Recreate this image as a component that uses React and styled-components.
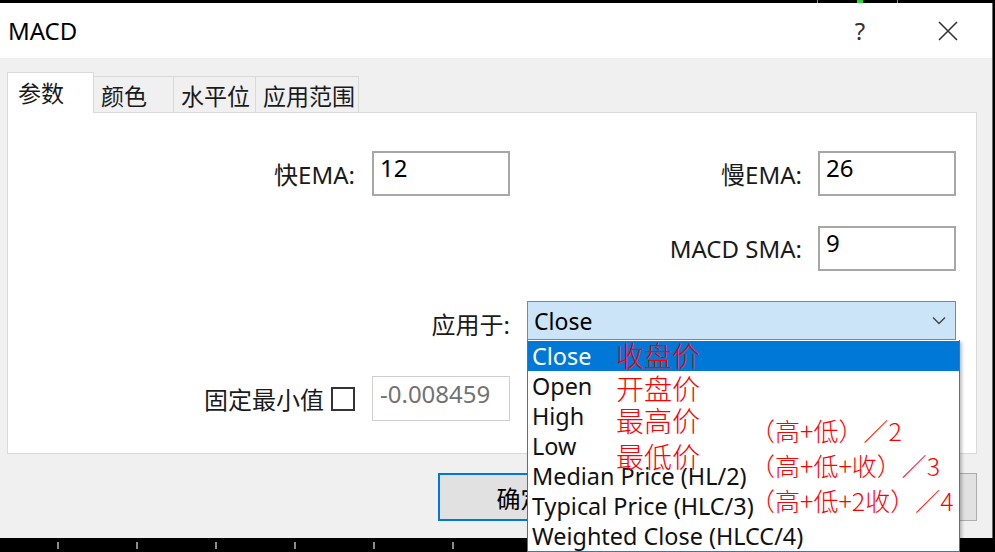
import styled, { createGlobalStyle } from "styled-components";

const GlobalStyle = createGlobalStyle`
  html, body {
    margin: 0;
    padding: 0;
    background: #000;
  }
  body {
    font-family: "Noto Sans", "Noto Sans CJK SC", sans-serif;
  }
`;

const Screen = styled.div`
  width: 995px;
  height: 552px;
  overflow: hidden;
  background: #000;
  display: flex;
  flex-direction: column;
`;

const TopStrip = styled.div`
  flex: none;
  height: 3px;
  background:
    linear-gradient(#2bd13a, #2bd13a) 817px 0 / 1px 3px no-repeat,
    linear-gradient(#2bd13a, #2bd13a) 857px 0 / 6px 3px no-repeat,
    linear-gradient(#2bd13a, #2bd13a) 897px 0 / 1px 3px no-repeat,
    #000;
`;

const Middle = styled.div`
  flex: none;
  height: 535px;
  display: flex;
`;

const RightStrip = styled.div`
  flex: 1;
  background: #000;
`;

const BottomStrip = styled.div`
  flex: 1;
  background:
    repeating-linear-gradient(to right, transparent 0 57px, #8a8a8a 57px 59px, transparent 59px 79px)
      0 4px / 100% 7px no-repeat,
    #000;
`;

const Dialog = styled.div`
  width: 992px;
  background: #f0f0f0;
  border-right: 1px solid #6a6a6a;
  display: flex;
  flex-direction: column;
  color: #1a1a1a;
`;

const TitleBar = styled.div`
  height: 55px;
  background: #fff;
  display: flex;
  align-items: center;
  padding-left: 8px;
`;

const Title = styled.div`
  flex: 1;
  font-size: 24px;
  color: #000;
`;

const TitleButton = styled.div`
  width: 88px;
  height: 55px;
  display: flex;
  align-items: center;
  justify-content: center;
  font-size: 24px;
  color: #333;
`;

const Body = styled.div`
  padding: 15px 15px 0 7px;
  display: flex;
  flex-direction: column;
`;

const Tabs = styled.div`
  display: flex;
  align-items: flex-end;
  height: 40px;
  margin-bottom: -1px;
  position: relative;
  z-index: 1;
`;

const Tab = styled.div`
  box-sizing: border-box;
  width: ${(p) => p.$w}px;
  height: ${(p) => (p.$active ? 41 : 37)}px;
  margin-left: ${(p) => (p.$active ? 0 : -1)}px;
  padding-left: ${(p) => (p.$active ? 10 : 7)}px;
  padding-bottom: ${(p) => (p.$active ? 2 : 0)}px;
  border: 1px solid #d9d9d9;
  border-bottom: ${(p) => (p.$active ? "none" : "1px solid #d9d9d9")};
  background: ${(p) => (p.$active ? "#fff" : "#f0f0f0")};
  display: flex;
  align-items: center;
  font-size: 23px;
  white-space: nowrap;
`;

const Panel = styled.div`
  box-sizing: border-box;
  height: 342px;
  background: #fff;
  border: 1px solid #d9d9d9;
  padding-top: 38px;
`;

const Grid = styled.div`
  display: grid;
  grid-template-columns: 347px 17px 138px 17px 275px 16px 138px;
  grid-template-rows: repeat(4, 45px);
  row-gap: 30px;
`;

const Label = styled.div`
  grid-column: ${(p) => p.$col};
  grid-row: ${(p) => p.$row};
  justify-self: end;
  align-self: center;
  display: flex;
  align-items: center;
  gap: 7px;
  font-size: 24px;
  white-space: nowrap;
`;

const Field = styled.div`
  grid-column: ${(p) => p.$col};
  grid-row: ${(p) => p.$row};
  box-sizing: border-box;
  height: 45px;
  padding-left: ${(p) => (p.$disabled ? 7 : 6)}px;
  border: ${(p) => (p.$disabled ? "1px solid #cfcfcf" : "2px solid #a7a7a7")};
  background: #fff;
  color: ${(p) => (p.$disabled ? "#727272" : "#000")};
  font-size: 24px;
  line-height: ${(p) => (p.$disabled ? 34 : 30)}px;
`;

const CheckBox = styled.div`
  box-sizing: border-box;
  width: 24px;
  height: 24px;
  border: 2px solid #333;
  background: #fff;
`;

const SelectWrap = styled.div`
  grid-column: 5 / span 3;
  grid-row: 3;
  align-self: start;
  position: relative;
`;

const Select = styled.div`
  box-sizing: border-box;
  height: 39px;
  border: 1px solid #3c98e0;
  background: #cce4f7;
  display: flex;
  align-items: center;
  justify-content: space-between;
  padding: 0 9px 0 6px;
  font-size: 23px;
  color: #000;
`;

const DropList = styled.div`
  position: absolute;
  top: 100%;
  left: 0;
  width: 433px;
  box-sizing: border-box;
  padding-top: 1px;
  background: #fff;
  border: 1px solid #1f7fd6;
  border-top: none;
  box-shadow: 2px 2px 3px rgba(0, 0, 0, 0.25);
  z-index: 10;
`;

const Option = styled.div`
  height: 30px;
  padding-left: 4px;
  font-size: 23.4px;
  line-height: 30px;
  white-space: nowrap;
  background: ${(p) => (p.$active ? "#0078d7" : "transparent")};
  color: ${(p) => (p.$active ? "#fff" : "#111")};
`;

const Note = styled.div`
  position: absolute;
  left: ${(p) => p.$x}px;
  top: ${(p) => p.$y}px;
  font-family: "Noto Sans CJK SC", sans-serif;
  font-weight: 300;
  font-size: ${(p) => p.$size}px;
  line-height: 1;
  color: #ff0000;
  white-space: nowrap;
`;

const Buttons = styled.div`
  display: flex;
  justify-content: flex-end;
  gap: 22px;
  margin-top: 19px;
`;

const Button = styled.div`
  box-sizing: border-box;
  width: 165px;
  height: 48px;
  background: #e1e1e1;
  border: ${(p) => (p.$primary ? "2px solid #0078d7" : "1px solid #adadad")};
  display: flex;
  align-items: center;
  justify-content: center;
  font-size: 24px;
  color: #000;
`;

const tabs = [
  { label: "参数", w: 87, active: true },
  { label: "颜色", w: 81 },
  { label: "水平位", w: 83 },
  { label: "应用范围", w: 104 },
];

const options = [
  "Close",
  "Open",
  "High",
  "Low",
  "Median Price (HL/2)",
  "Typical Price (HLC/3)",
  "Weighted Close (HLCC/4)",
];

const notes = [
  { text: "收盘价", x: 88, y: 1, size: 28 },
  { text: "开盘价", x: 88, y: 34, size: 28 },
  { text: "最高价", x: 88, y: 66, size: 28 },
  { text: "最低价", x: 88, y: 102, size: 28 },
  { text: "（高+低）／2", x: 222, y: 78, size: 25 },
  { text: "（高+低+收）／3", x: 222, y: 113, size: 25 },
  { text: "（高+低+2收）／4", x: 222, y: 148, size: 25 },
];

const Chevron = () => (
  <svg width="14" height="9" viewBox="0 0 14 9">
    <polyline points="1,1.5 7,7.5 13,1.5" fill="none" stroke="#444" strokeWidth="1.4" />
  </svg>
);

const CloseIcon = () => (
  <svg width="20" height="20" viewBox="0 0 20 20">
    <path d="M1 1 L19 19 M19 1 L1 19" stroke="#333" strokeWidth="1.6" />
  </svg>
);

const App = () => {
  return (
    <Screen>
      <GlobalStyle />
      <TopStrip />
      <Middle>
        <Dialog>
          <TitleBar>
            <Title>MACD</Title>
            <TitleButton>?</TitleButton>
            <TitleButton>
              <CloseIcon />
            </TitleButton>
          </TitleBar>
          <Body>
            <Tabs>
              {tabs.map((t) => (
                <Tab key={t.label} $w={t.w} $active={t.active}>
                  {t.label}
                </Tab>
              ))}
            </Tabs>
            <Panel>
              <Grid>
                <Label $col={1} $row={1}>快EMA:</Label>
                <Field $col={3} $row={1}>12</Field>
                <Label $col={5} $row={1}>慢EMA:</Label>
                <Field $col={7} $row={1}>26</Field>

                <Label $col={5} $row={2}>MACD SMA:</Label>
                <Field $col={7} $row={2}>9</Field>

                <Label $col={3} $row={3}>应用于:</Label>
                <SelectWrap>
                  <Select>
                    <span>Close</span>
                    <Chevron />
                  </Select>
                  <DropList>
                    {options.map((o, i) => (
                      <Option key={o} $active={i === 0}>
                        {o}
                      </Option>
                    ))}
                    {notes.map((n) => (
                      <Note key={n.text} $x={n.x} $y={n.y} $size={n.size}>
                        {n.text}
                      </Note>
                    ))}
                  </DropList>
                </SelectWrap>

                <Label $col={1} $row={4}>
                  固定最小值
                  <CheckBox />
                </Label>
                <Field $col={3} $row={4} $disabled>
                  -0.008459
                </Field>
              </Grid>
            </Panel>
            <Buttons>
              <Button $primary>确定</Button>
              <Button>取消</Button>
              <Button>重置</Button>
            </Buttons>
          </Body>
        </Dialog>
        <RightStrip />
      </Middle>
      <BottomStrip />
    </Screen>
  );
};

export default App;
